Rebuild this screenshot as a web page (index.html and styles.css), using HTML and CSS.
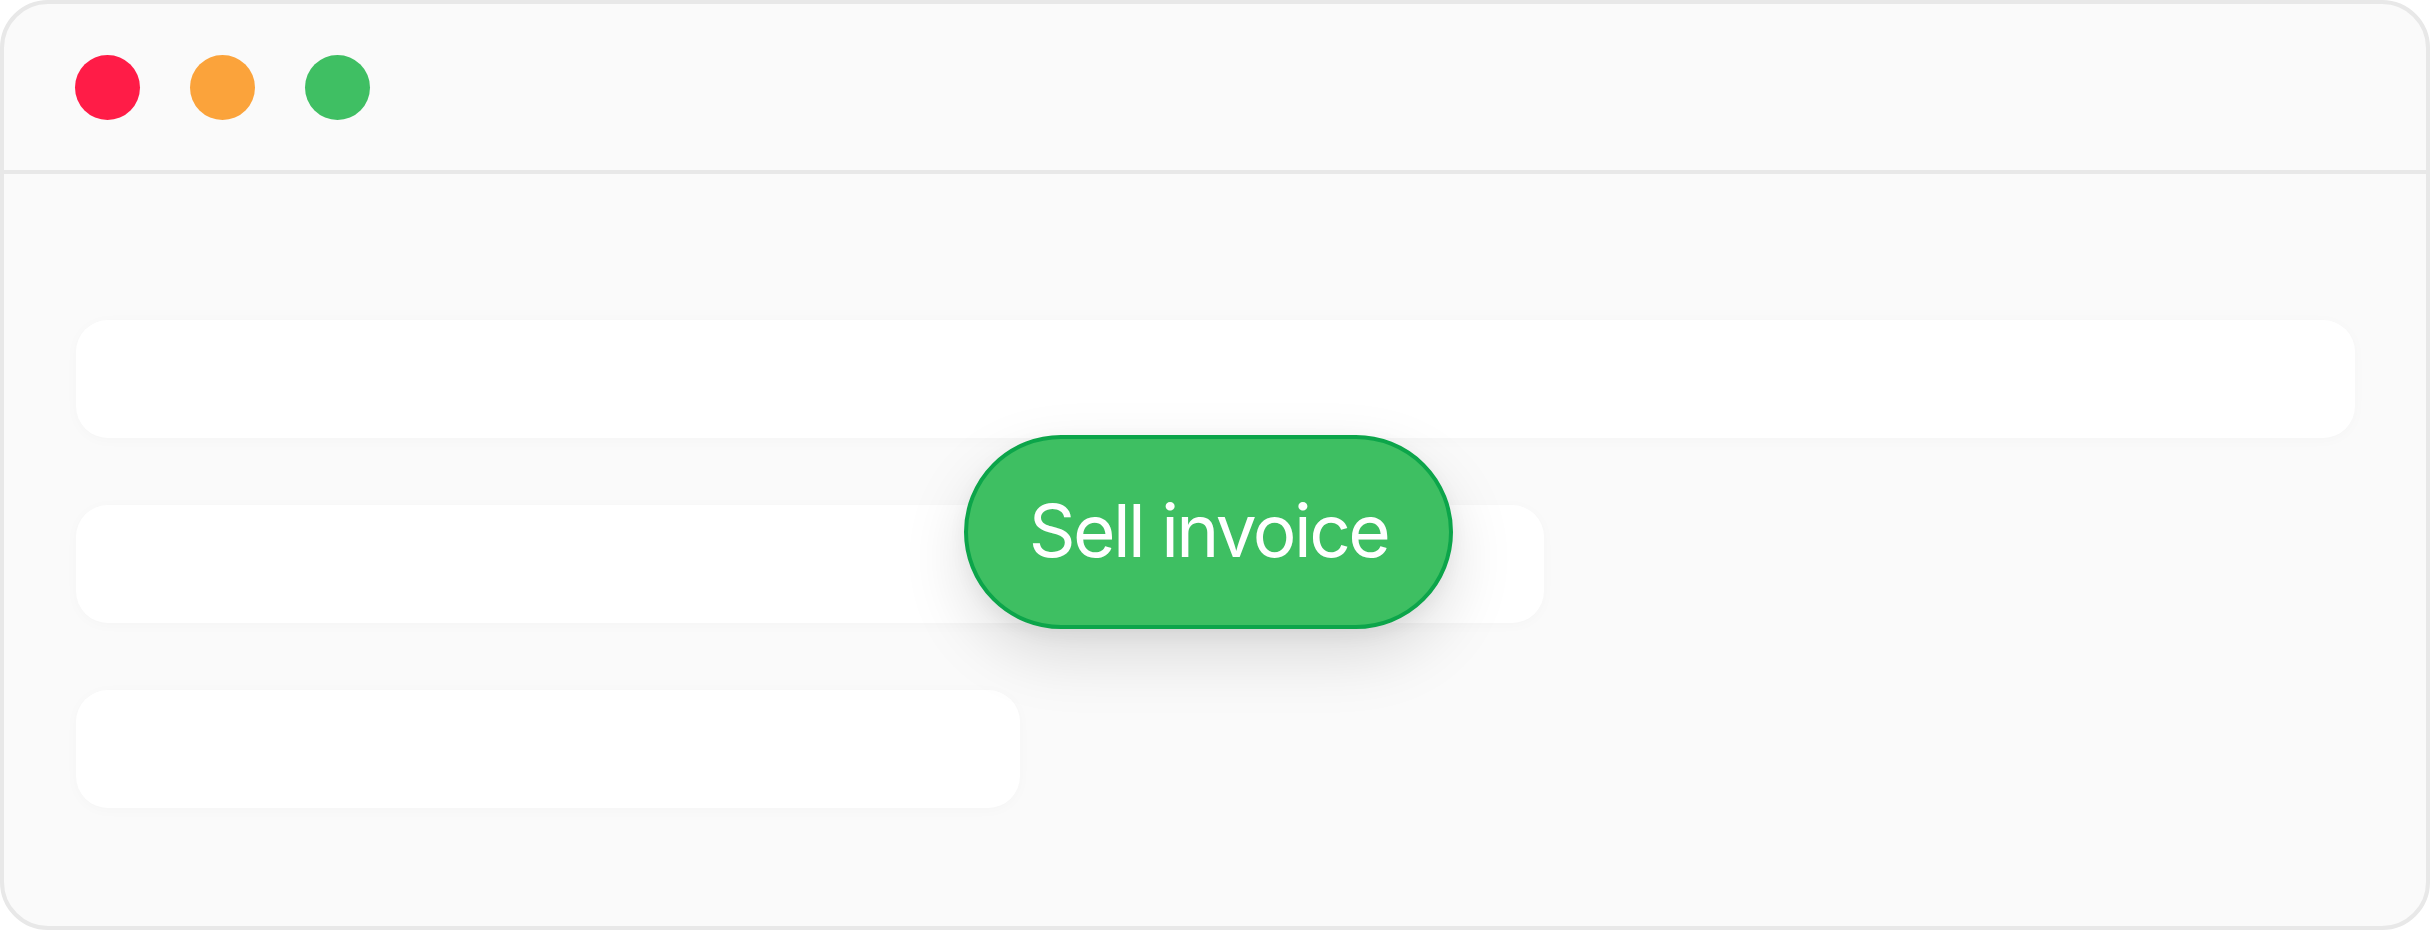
FILE: index.html
```html
<!DOCTYPE html>
<html lang="en">
<head>
<meta charset="utf-8">
<title>Sell invoice</title>
<link rel="stylesheet" href="styles.css">
</head>
<body>
<div class="window">
  <header class="titlebar">
    <span class="dot dot-red"></span>
    <span class="dot dot-orange"></span>
    <span class="dot dot-green"></span>
  </header>
  <main class="content">
    <div class="bar bar-full"></div>
    <div class="bar bar-mid"></div>
    <div class="bar bar-short"></div>
  </main>
  <button class="sell-btn" type="button">Sell invoice</button>
</div>
</body>
</html>
```

FILE: styles.css
```css
html, body {
  margin: 0;
  padding: 0;
  background: #ffffff;
}

body {
  width: 2430px;
  height: 930px;
  font-family: Inter, "Noto Sans", "Liberation Sans", sans-serif;
}

.window {
  position: relative;
  box-sizing: border-box;
  width: 2430px;
  height: 930px;
  background: #fafafa;
  border: 4px solid #e8e8e8;
  border-radius: 48px;
  overflow: hidden;
  display: flex;
  flex-direction: column;
}

.titlebar {
  height: 166px;
  flex: 0 0 auto;
  border-bottom: 4px solid #e8e8e8;
  display: flex;
  align-items: center;
  gap: 50px;
  padding-left: 71px;
}

.dot {
  width: 65px;
  height: 65px;
  border-radius: 50%;
  display: block;
}

.dot-red { background: #ff1c47; }
.dot-orange { background: #fba33b; }
.dot-green { background: #3fbf63; }

.content {
  flex: 1 1 auto;
  display: flex;
  flex-direction: column;
  align-items: flex-start;
  gap: 67px;
  padding: 146px 0 0 72px;
}

.bar {
  height: 118px;
  background: #ffffff;
  border-radius: 32px;
  box-shadow: 0 2px 14px rgba(0, 0, 0, 0.025);
}

.bar-full { width: 2279px; }
.bar-mid { width: 1468px; }
.bar-short { width: 944px; }

.sell-btn {
  position: absolute;
  left: 960px;
  top: 431px;
  box-sizing: border-box;
  width: 489px;
  height: 194px;
  margin: 0;
  padding: 0 0 4px 0;
  background: #3ebf62;
  border: 4px solid #0ca54a;
  border-radius: 97px;
  color: #ffffff;
  font-family: Inter, "Noto Sans", "Liberation Sans", sans-serif;
  font-size: 73px;
  font-weight: 400;
  letter-spacing: -0.035em;
  line-height: 1;
  box-shadow: 0 26px 64px rgba(0, 0, 0, 0.13), 0 6px 18px rgba(0, 0, 0, 0.05);
  display: flex;
  align-items: center;
  justify-content: center;
}
```
